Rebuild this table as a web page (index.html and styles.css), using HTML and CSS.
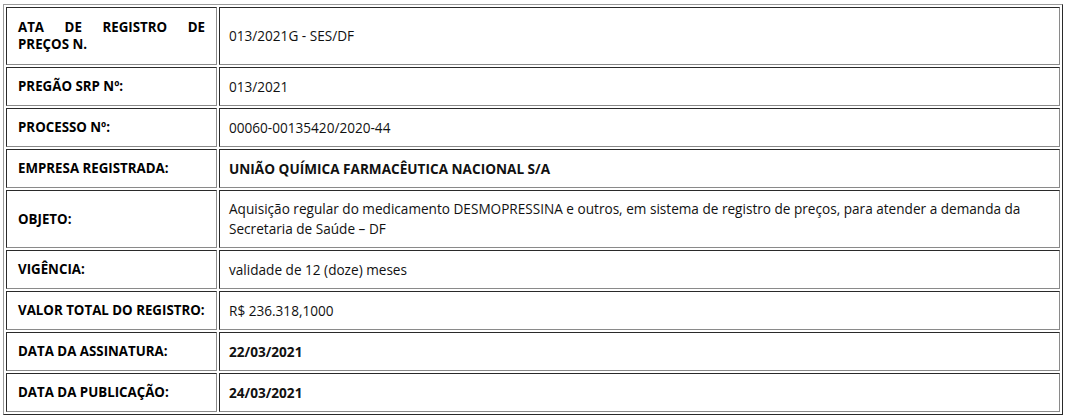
FILE: index.html
```html
<!DOCTYPE html>
<html lang="pt-BR">
<head>
<meta charset="utf-8">
<title>Ata de Registro de Preços</title>
<link rel="stylesheet" href="styles.css">
</head>
<body>
<table class="ata">
  <tr class="tall">
    <td class="label"><span class="just-line">ATA DE REGISTRO DE</span>PREÇOS N.</td>
    <td class="value">013/2021G - SES/DF</td>
  </tr>
  <tr>
    <td class="label">PREGÃO SRP Nº:</td>
    <td class="value">013/2021</td>
  </tr>
  <tr>
    <td class="label">PROCESSO Nº:</td>
    <td class="value">00060-00135420/2020-44</td>
  </tr>
  <tr>
    <td class="label">EMPRESA REGISTRADA:</td>
    <td class="value strong">UNIÃO QUÍMICA FARMACÊUTICA NACIONAL S/A</td>
  </tr>
  <tr class="tall">
    <td class="label">OBJETO:</td>
    <td class="value">Aquisição regular do medicamento DESMOPRESSINA e outros, em sistema de registro de preços, para atender a demanda da Secretaria de Saúde – DF</td>
  </tr>
  <tr>
    <td class="label">VIGÊNCIA:</td>
    <td class="value">validade de 12 (doze) meses</td>
  </tr>
  <tr>
    <td class="label">VALOR TOTAL DO REGISTRO:</td>
    <td class="value">R$ 236.318,1000</td>
  </tr>
  <tr>
    <td class="label">DATA DA ASSINATURA:</td>
    <td class="value strong">22/03/2021</td>
  </tr>
  <tr>
    <td class="label">DATA DA PUBLICAÇÃO:</td>
    <td class="value strong">24/03/2021</td>
  </tr>
</table>
</body>
</html>
```
FILE: styles.css
```css
html, body {
  background: #ffffff;
}
body {
  margin: 4px 3px;
  font-family: "Open Sans", "Liberation Sans", sans-serif;
  font-size: 13.6px;
  color: #111111;
}
.ata {
  width: 1060px;
  border-collapse: separate;
  border-spacing: 2px;
  border: 1px solid;
  border-color: #9a9a9a #2a2a2a #2a2a2a #9a9a9a;
  table-layout: fixed;
}
.ata tr {
  height: 39px;
}
.ata tr.tall {
  height: 58px;
}
.ata td {
  border: 1px solid;
  border-color: #2a2a2a #8a8a8a #8a8a8a #2a2a2a;
  padding: 0 11px 0 11px;
  vertical-align: middle;
}
.ata td.value {
  padding: 0 10px 0 9px;
}
.label {
  width: 187px;
  font-weight: 700;
  font-size: 13.3px;
  line-height: 17px;
  white-space: nowrap;
  color: #000000;
}
.value {
  line-height: 20px;
}
.strong {
  font-weight: 700;
}
.just-line {
  display: block;
  text-align: justify;
  text-align-last: justify;
}
```
